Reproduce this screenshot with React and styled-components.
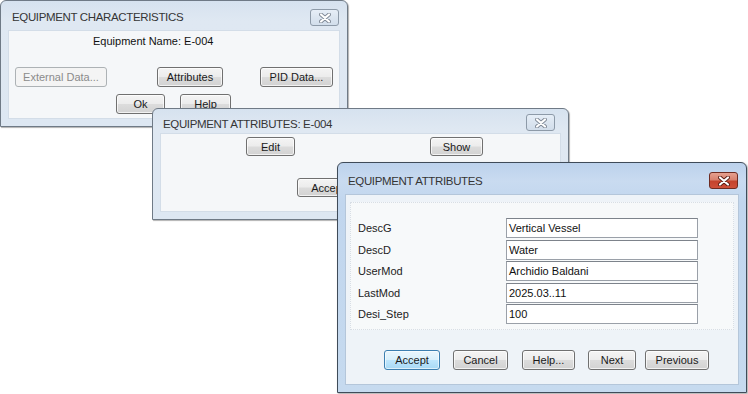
import React from "react";
import styled, { createGlobalStyle, css } from "styled-components";

const Global = createGlobalStyle`
  html, body { margin: 0; padding: 0; background: #ffffff; }
  body { font-family: "Liberation Sans", Arial, sans-serif; }
`;

const Desktop = styled.div`
  position: relative;
  width: 748px;
  height: 394px;
  background: #ffffff;
  overflow: hidden;
`;

const Win = styled.div`
  position: absolute;
  left: ${(p) => p.$left}px;
  top: ${(p) => p.$top}px;
  width: ${(p) => p.$w}px;
  height: ${(p) => p.$h}px;
  box-sizing: border-box;
  display: flex;
  flex-direction: column;
  padding: 0 7px 7px 7px;
  border-radius: 6px 6px 0 0;
  ${(p) =>
    p.$active
      ? css`
          border: 1px solid #3f4b59;
          background: linear-gradient(180deg, #bcd2ec 0px, #c9dbf0 18px, #c1d6ee 40px, #c6daef 100%);
          box-shadow: 1px 1px 2px rgba(0, 0, 0, 0.35);
        `
      : css`
          border: 1px solid #6f7a86;
          background: linear-gradient(180deg, #d6e2ef 0px, #dfe8f2 20px, #dde7f2 100%);
          box-shadow: 1px 1px 1px rgba(0, 0, 0, 0.3);
        `}
`;

const TitleBar = styled.div`
  height: ${(p) => p.$bar}px;
  flex: none;
  display: flex;
  align-items: flex-start;
  justify-content: space-between;
  box-sizing: border-box;
  padding-top: ${(p) => p.$pt}px;
  padding-right: ${(p) => p.$pr || 1}px;
`;

const Title = styled.span`
  font-family: "Liberation Sans", Arial, sans-serif;
  font-size: 11.5px;
  line-height: 18px;
  color: #353535;
  padding-left: ${(p) => p.$pl || 3}px;
  letter-spacing: -0.35px;
`;

const CloseBtn = styled.div`
  width: 29px;
  height: 17px;
  box-sizing: border-box;
  margin-top: ${(p) => p.$mt || 0}px;
  border-radius: 3px;
  display: flex;
  align-items: center;
  justify-content: center;
  ${(p) =>
    p.$active
      ? css`
          border: 1px solid #6e2b21;
          background: linear-gradient(180deg, #e6a08f 0%, #d8826f 45%, #c4432d 55%, #cf503a 100%);
        `
      : css`
          border: 1px solid #8d9aa8;
          background: linear-gradient(180deg, #e6eef7 0%, #dbe5f0 50%, #d2deeb 100%);
        `}
`;

const Client = styled.div`
  flex: 1;
  box-sizing: border-box;
  background: ${(p) => p.$bg || "#f5f7f9"};
  border: 1px solid ${(p) => p.$bd || "#d3dde8"};
  display: flex;
  flex-direction: column;
`;

const NameLabel = styled.div`
  font-size: 11px;
  line-height: 14px;
  color: #111;
  margin-left: ${(p) => p.$ml}px;
  margin-top: ${(p) => p.$mt}px;
`;

const Row = styled.div`
  display: flex;
  align-items: center;
  margin-top: ${(p) => p.$mt || 0}px;
  padding-left: ${(p) => p.$pl || 0}px;
`;

const Btn = styled.div`
  flex: none;
  width: ${(p) => p.$w}px;
  height: ${(p) => p.$h || 20}px;
  margin-left: ${(p) => p.$ml || 0}px;
  box-sizing: border-box;
  border-radius: 3px;
  display: flex;
  align-items: center;
  justify-content: center;
  font-family: "Liberation Sans", Arial, sans-serif;
  font-size: 11px;
  color: #1a1a1a;
  white-space: nowrap;
  overflow: hidden;
  border: 1px solid #707070;
  background: linear-gradient(180deg, #f4f4f4 0%, #ececec 48%, #dcdcdc 52%, #d2d2d2 100%);
  box-shadow: inset 0 0 0 1px rgba(255, 255, 255, 0.7);
  ${(p) =>
    p.$disabled &&
    css`
      border-color: #adb2b5;
      background: #f4f4f4;
      color: #8b8b8b;
      box-shadow: none;
    `}
  ${(p) =>
    p.$default &&
    css`
      border-color: #3c7fb1;
      background: linear-gradient(180deg, #eaf6fd 0%, #d9f0fc 48%, #bee6fd 52%, #a7d9f5 100%);
      box-shadow: inset 0 0 0 1px rgba(255, 255, 255, 0.6);
    `}
`;

const Panel = styled.div`
  margin: 7px 4px 0 4px;
  background: #f7f9fa;
  border: 1px dotted #d8dee5;
  padding: 15px 0 5px 7px;
  display: grid;
  grid-template-columns: 148px 192px;
  row-gap: 1.5px;
  align-items: center;
`;

const FieldLabel = styled.div`
  font-size: 11px;
  color: #222;
  line-height: 14px;
`;

const Field = styled.div`
  height: 20px;
  box-sizing: border-box;
  border: 1px solid #9aa0a8;
  border-top-color: #7d838b;
  background: #ffffff;
  font-size: 11px;
  color: #111;
  line-height: 18px;
  padding-left: 2px;
  white-space: nowrap;
`;

const XIcon = ({ active }) => (
  <svg width="12" height="10" viewBox="0 0 12 10">
    <path
      d="M2 1.5 L10 8.5 M10 1.5 L2 8.5"
      stroke={active ? "#5a1d14" : "#7f8996"}
      strokeWidth="4"
      strokeLinecap="round"
      fill="none"
    />
    <path
      d="M2 1.5 L10 8.5 M10 1.5 L2 8.5"
      stroke="#ffffff"
      strokeWidth="2.2"
      strokeLinecap="round"
      fill="none"
    />
  </svg>
);

const fields = [
  ["DescG", "Vertical Vessel"],
  ["DescD", "Water"],
  ["UserMod", "Archidio Baldani"],
  ["LastMod", "2025.03..11"],
  ["Desi_Step", "100"],
];

export default function App() {
  return (
    <>
      <Global />
      <Desktop>
        <Win $left={0} $top={0} $w={348} $h={127}>
          <TitleBar $bar={29} $pt={7} $pr={1}>
            <Title $pl={4}>EQUIPMENT CHARACTERISTICS</Title>
            <CloseBtn $mt={1}>
              <XIcon />
            </CloseBtn>
          </TitleBar>
          <Client>
            <NameLabel $ml={84} $mt={3}>
              Equipment Name: E-004
            </NameLabel>
            <Row $mt={19} $pl={6}>
              <Btn $w={92} $disabled>
                External Data...
              </Btn>
              <Btn $w={66} $ml={50}>
                Attributes
              </Btn>
              <Btn $w={73} $ml={37}>
                PID Data...
              </Btn>
            </Row>
            <Row $mt={7} $pl={107}>
              <Btn $w={49}>Ok</Btn>
              <Btn $w={51} $ml={15}>
                Help
              </Btn>
            </Row>
          </Client>
        </Win>

        <Win $left={152} $top={108} $w={417} $h={112}>
          <TitleBar $bar={24} $pt={6} $pr={6}>
            <Title $pl={3}>EQUIPMENT ATTRIBUTES: E-004</Title>
            <CloseBtn $mt={-1}>
              <XIcon />
            </CloseBtn>
          </TitleBar>
          <Client>
            <Row $mt={3} $pl={85}>
              <Btn $w={49} $h={19}>
                Edit
              </Btn>
              <Btn $w={53} $h={19} $ml={135}>
                Show
              </Btn>
            </Row>
            <Row $mt={22} $pl={136}>
              <Btn $w={62} $h={19}>
                Accept
              </Btn>
            </Row>
          </Client>
        </Win>

        <Win $left={337} $top={162} $w={410} $h={231} $active>
          <TitleBar $bar={31} $pt={9} $pr={0}>
            <Title $pl={3}>EQUIPMENT ATTRIBUTES</Title>
            <CloseBtn $mt={0} $active>
              <XIcon active />
            </CloseBtn>
          </TitleBar>
          <Client $bg="#eef3f8" $bd="#b4c6da">
            <Panel>
              {fields.map(([label, value]) => (
                <React.Fragment key={label}>
                  <FieldLabel>{label}</FieldLabel>
                  <Field>{value}</Field>
                </React.Fragment>
              ))}
            </Panel>
            <Row $mt={20} $pl={38}>
              <Btn $w={56} $default>
                Accept
              </Btn>
              <Btn $w={55} $ml={13}>
                Cancel
              </Btn>
              <Btn $w={53} $ml={14}>
                Help...
              </Btn>
              <Btn $w={48} $ml={13}>
                Next
              </Btn>
              <Btn $w={64} $ml={9}>
                Previous
              </Btn>
            </Row>
          </Client>
        </Win>
      </Desktop>
    </>
  );
}
